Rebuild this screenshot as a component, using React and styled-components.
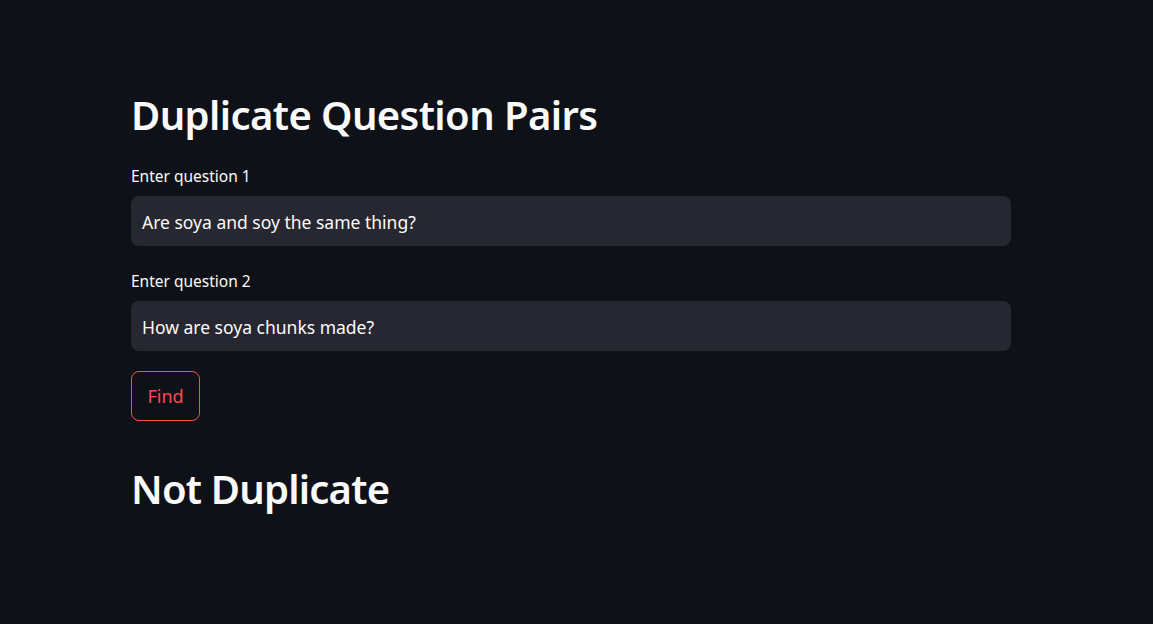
import styled, { createGlobalStyle } from "styled-components";

const GlobalStyle = createGlobalStyle`
  html, body {
    margin: 0;
    padding: 0;
    background: #0e1117;
  }
  body {
    font-family: "Noto Sans", "Open Sans", sans-serif;
    color: #fafafa;
  }
`;

const Page = styled.main`
  min-height: 624px;
  background: #0e1117;
  padding: 90px 0 0 131px;
  box-sizing: border-box;
`;

const Block = styled.div`
  width: 880px;
  display: flex;
  flex-direction: column;
`;

const Title = styled.h1`
  margin: 0;
  font-size: 40px;
  font-weight: 600;
  line-height: 50px;
  letter-spacing: -0.6px;
  color: #fafafa;
`;

const Field = styled.label`
  display: flex;
  flex-direction: column;
  margin-top: ${(p) => p.$top}px;
`;

const Label = styled.span`
  font-size: 15.5px;
  line-height: 20px;
  margin-bottom: 10px;
`;

const Input = styled.input`
  height: 50px;
  box-sizing: border-box;
  border: none;
  border-radius: 8px;
  background: #262730;
  color: #fafafa;
  font-family: inherit;
  font-size: 17.5px;
  padding: 1px 11px 0;
  outline: none;
`;

const Button = styled.button`
  align-self: flex-start;
  margin-top: 20px;
  height: 50px;
  width: 69px;
  border: 1px solid #ff4b4b;
  border-radius: 8px;
  background: transparent;
  color: #ff4b4b;
  font-family: inherit;
  font-size: 18px;
  cursor: pointer;
`;

const Result = styled.h2`
  margin: 43px 0 0;
  font-size: 40px;
  font-weight: 600;
  line-height: 50px;
  letter-spacing: -0.8px;
  color: #fafafa;
`;

export default function App() {
  return (
    <Page>
      <GlobalStyle />
      <Block>
        <Title>Duplicate Question Pairs</Title>
        <Field $top={26}>
          <Label>Enter question 1</Label>
          <Input defaultValue="Are soya and soy the same thing?" />
        </Field>
        <Field $top={25}>
          <Label>Enter question 2</Label>
          <Input defaultValue="How are soya chunks made?" />
        </Field>
        <Button>Find</Button>
        <Result>Not Duplicate</Result>
      </Block>
    </Page>
  );
}
